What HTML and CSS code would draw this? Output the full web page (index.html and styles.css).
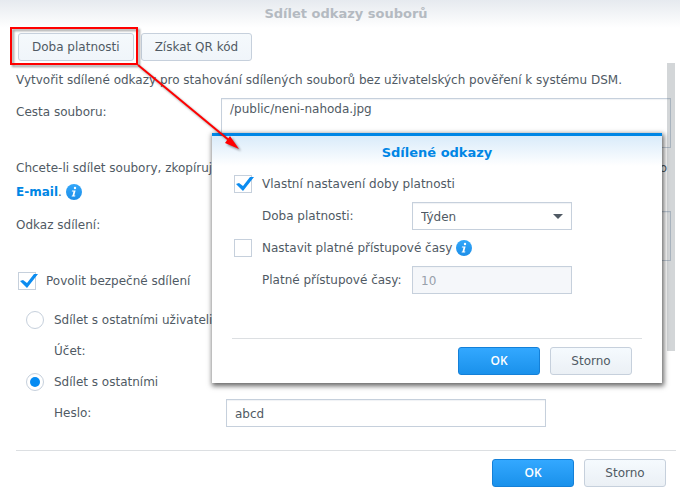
FILE: index.html
```
<!DOCTYPE html>
<html lang="cs">
<head>
    <meta charset="UTF-8">
    <meta name="viewport" content="width=device-width, initial-scale=1.0">
    <title>Sdílet odkazy souborů</title>
    <link rel="stylesheet" href="styles.css">
</head>
<body>
    <div class="window">
        <h1 class="window-title">Sdílet odkazy souborů</h1>

        <div class="content">
            <div class="toolbar">
                <button type="button" class="btn btn-tool">Doba platnosti</button>
                <button type="button" class="btn btn-tool">Získat QR kód</button>
            </div>

            <p class="intro">Vytvořit sdílené odkazy pro stahování sdílených souborů bez uživatelských pověření k systému DSM.</p>

            <div class="row row-top">
                <label for="path">Cesta souboru:</label>
                <textarea id="path" readonly>/public/neni-nahoda.jpg</textarea>
            </div>

            <div class="hint">
                <p class="hint-line"><span>Chcete-li sdílet soubory, zkopírujte</span><span>o</span></p>
                <p><a href="#">E-mail</a>.
                    <svg class="info" viewBox="0 0 16 16"><use href="#info-icon"/></svg>
                </p>
            </div>

            <div class="row row-top">
                <label for="link">Odkaz sdílení:</label>
                <textarea id="link" readonly></textarea>
            </div>

            <div class="row secure">
                <input type="checkbox" id="secure" checked>
                <label for="secure">Povolit bezpečné sdílení</label>
            </div>

            <div class="share-options">
                <div class="row">
                    <input type="radio" name="share" id="share-users">
                    <label for="share-users">Sdílet s ostatními uživateli</label>
                </div>
                <div class="row row-field">
                    <label for="account">Účet:</label>
                    <input type="text" id="account" disabled>
                </div>
                <div class="row">
                    <input type="radio" name="share" id="share-others" checked>
                    <label for="share-others">Sdílet s ostatními</label>
                </div>
                <div class="row row-field">
                    <label for="password">Heslo:</label>
                    <input type="text" id="password" value="abcd">
                </div>
            </div>
        </div>

        <div class="footer">
            <button type="button" class="btn btn-primary">OK</button>
            <button type="button" class="btn">Storno</button>
        </div>

        <div class="scrollbar"></div>
    </div>

    <!-- validity dialog -->
    <div class="dialog" role="dialog" aria-labelledby="dialog-title">
        <h2 class="dialog-title" id="dialog-title">Sdílené odkazy</h2>
        <div class="dialog-body">
            <div class="row">
                <input type="checkbox" id="custom" checked>
                <label for="custom">Vlastní nastavení doby platnosti</label>
            </div>
            <div class="row row-field">
                <label for="period">Doba platnosti:</label>
                <div class="select">
                    <select id="period">
                        <option>Týden</option>
                    </select>
                </div>
            </div>
            <div class="row">
                <input type="checkbox" id="limit">
                <label for="limit">Nastavit platné přístupové časy</label>
                <svg class="info" viewBox="0 0 16 16"><use href="#info-icon"/></svg>
            </div>
            <div class="row row-field">
                <label for="times">Platné přístupové časy:</label>
                <input type="text" id="times" value="10" disabled>
            </div>
        </div>
        <div class="footer">
            <button type="button" class="btn btn-primary">OK</button>
            <button type="button" class="btn">Storno</button>
        </div>
    </div>

    <!-- highlight with arrow to the dialog -->
    <svg class="callout" width="245" height="160">
        <rect x="11" y="28" width="126" height="36"/>
        <line x1="138" y1="65" x2="230" y2="141"/>
        <polygon points="239,149 225,143 230,136"/>
    </svg>

    <svg class="defs">
        <defs>
            <linearGradient id="info-fill" x2="0" y2="1">
                <stop offset="0" stop-color="#33a7fa"/>
                <stop offset="1" stop-color="#1c8ee8"/>
            </linearGradient>
            <symbol id="info-icon" viewBox="0 0 16 16">
                <circle cx="8" cy="8" r="8" fill="url(#info-fill)"/>
                <circle cx="9" cy="4" r="1.2" fill="#fff"/>
                <path d="M6 6.6h3.6L8.3 11.6h1.1l-.3.9H5.6l.3-.9h.6l1-4.1H5.8z" fill="#fff"/>
            </symbol>
        </defs>
    </svg>
</body>
</html>
```
FILE: styles.css
```
* {
    box-sizing: border-box;
}

body {
    margin: 0;
    font-family: Verdana, "DejaVu Sans", sans-serif;
    font-size: 12px;
    line-height: 18px;
    color: #505a64;
    background-color: #fff;
}

h1, h2, p {
    margin: 0;
}

a {
    color: #0086e5;
    font-weight: bold;
    text-decoration: none;
}

/* main window */
.window {
    position: relative;
}

.window-title {
    height: 28px;
    padding: 5px 0 0 12px;
    text-align: center;
    font-size: 13px;
    line-height: 18px;
    color: #b4bac1;
    background: linear-gradient(#e6eaef, #fff);
}

.content {
    padding: 5px 9px 0 16px;
}

.toolbar {
    display: flex;
    gap: 7px;
    padding-left: 2px;
}

.intro {
    margin: 10px 0 9px;
    white-space: nowrap;
}

/* form rows */
.row {
    display: flex;
    align-items: center;
    min-height: 28px;
}

.row-top {
    align-items: flex-start;
}

.row-top label {
    width: 205px;
    padding-top: 5px;
}

.row-top textarea {
    flex: 1;
}

.hint {
    margin: 8px 0 7px;
    line-height: 24px;
}

.hint-line {
    display: flex;
    justify-content: space-between;
    padding-right: 4px;
}

.info {
    width: 16px;
    height: 16px;
    vertical-align: middle;
}

.hint .info {
    margin-bottom: 2px;
}

.secure {
    margin-top: 6px;
    padding-left: 2px;
}

.share-options {
    display: flex;
    flex-direction: column;
    gap: 3px;
    margin-top: 11px;
    padding-left: 10px;
}

.share-options .row-field label {
    width: 172px;
}

.share-options .row-field input {
    width: 320px;
}

.row-field {
    padding-left: 28px;
}

/* controls */
input, select, textarea, .btn {
    margin: 0;
    font: inherit;
    color: inherit;
}

input[type="text"], select, textarea {
    height: 28px;
    padding: 1px 8px 0;
    border: 1px solid #c6d0dc;
    border-radius: 0;
    background-color: #fff;
    box-shadow: inset 0 1px 1px #f0f2f5;
    outline: none;
}

textarea {
    height: 50px;
    resize: none;
    display: block;
}

input[type="text"]:disabled {
    color: #98a0aa;
    background-color: #f5f7fa;
}

input[type="checkbox"], input[type="radio"] {
    appearance: none;
    position: relative;
    flex: none;
    width: 18px;
    height: 18px;
    margin-right: 10px;
    border: 1px solid #c6d0dc;
    background-color: #fff;
}

input[type="radio"] {
    border-radius: 50%;
}

input[type="checkbox"]:checked::after {
    content: "";
    position: absolute;
    left: 1px;
    top: 0;
    width: 18px;
    height: 16px;
    background-color: #0c8cf0;
    clip-path: polygon(0 8px, 3px 7px, 7px 10px, 14px 1px, 18px 1px, 7px 15px);
}

input[type="radio"]:checked::after {
    content: "";
    position: absolute;
    left: 3px;
    top: 3px;
    width: 10px;
    height: 10px;
    border-radius: 50%;
    background-color: #058bf2;
}

.select {
    position: relative;
}

.select select {
    appearance: none;
    width: 100%;
    display: block;
}

.select::after {
    content: "";
    position: absolute;
    right: 9px;
    top: 12px;
    border: 5px solid transparent;
    border-top-color: #505a64;
    border-bottom: 0;
    pointer-events: none;
}

.btn {
    width: 82px;
    height: 28px;
    padding: 0;
    border: 1px solid #c6d0dc;
    border-radius: 3px;
    background: linear-gradient(#f5fafe, #ebf0f5);
}

.btn-tool {
    width: auto;
    padding: 0 13px;
    background: linear-gradient(#f5f9fc, #f0f5fa);
}

.btn-primary {
    border-color: #1480d8;
    color: #fff;
    font-family: "Open Sans", sans-serif;
    font-weight: 600;
    background: linear-gradient(#33a8ff, #1a91eb);
}

.footer {
    display: flex;
    justify-content: flex-end;
    gap: 10px;
    margin: 23px 4px 0 16px;
    padding: 8px 10px 0 0;
    border-top: 1px solid #dcdfe2;
}

.scrollbar {
    position: absolute;
    right: 5px;
    top: 63px;
    width: 8px;
    height: 288px;
    background-color: rgba(80, 90, 100, 0.25);
}

/* dialog */
.dialog {
    position: absolute;
    left: 212px;
    right: 18px;
    top: 133px;
    padding-bottom: 8px;
    border-top: 3px solid #0086e5;
    background-color: #fff;
    box-shadow: 1px 2px 5px 1px rgba(0, 0, 0, 0.6);
}

.dialog-title {
    height: 30px;
    padding-top: 8px;
    text-align: center;
    font-size: 13px;
    line-height: 18px;
    color: #0086e5;
    background: linear-gradient(#d9ebfa, #fff);
}

.dialog-body {
    display: flex;
    flex-direction: column;
    gap: 4px;
    padding: 4px 22px 0;
}

.dialog .row-field label {
    width: 150px;
    white-space: nowrap;
}

.dialog .row-field input, .dialog .select {
    width: 160px;
}

.dialog .info {
    margin-left: 4px;
}

.dialog .footer {
    margin: 44px 20px 0;
}

/* annotation */
.callout {
    position: absolute;
    left: 0;
    top: 0;
    pointer-events: none;
    filter: drop-shadow(2px 2px 1px rgba(0, 0, 0, 0.4));
}

.callout rect, .callout line {
    fill: none;
    stroke: #f00;
    stroke-width: 2;
}

.callout polygon {
    fill: #f00;
}

.defs {
    position: absolute;
    width: 0;
    height: 0;
}
```
